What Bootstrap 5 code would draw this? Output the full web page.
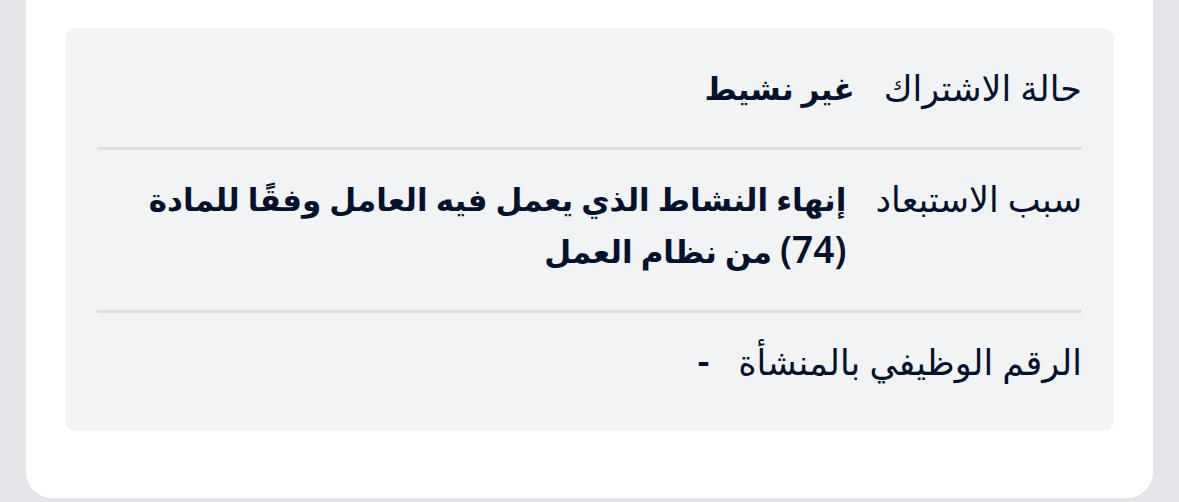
<!DOCTYPE html>
<html lang="ar" dir="rtl"><head><meta charset="utf-8"><meta name="viewport" content="width=device-width, initial-scale=1"><title>حالة الاشتراك</title>
<link href="https://cdn.jsdelivr.net/npm/bootstrap@5.3.0/dist/css/bootstrap.min.css" rel="stylesheet">
<style>
body{background:#e4e5e9;color:#03112d;font-family:"Noto Sans","DejaVu Sans",sans-serif;line-height:52px}
.sheet{background:#fff;border-radius:0 0 26px 26px;margin:0 26px;padding:28px 39px 67px}
.panel{background:#f2f3f5;border-radius:10px;padding:34px 32px 43px}
.item{gap:29px;margin:0}
.item+.item{border-top:3px solid #dedfe1;padding-top:23px}
.item:not(:last-child){padding-bottom:33px}
.item dt{font-size:35px;font-weight:400;white-space:nowrap}
.item dd{font-size:31px;font-weight:700;margin:0}
.number{font-size:37px;font-weight:600;line-height:1}
</style></head><body>
<main class="sheet"><section class="panel">
<dl class="item d-flex"><dt>حالة الاشتراك</dt><dd>غير نشيط</dd></dl>
<dl class="item d-flex"><dt>سبب الاستبعاد</dt><dd>إنهاء النشاط الذي يعمل فيه العامل وفقًا للمادة <span class="number">(74)</span> من نظام العمل</dd></dl>
<dl class="item d-flex"><dt>الرقم الوظيفي بالمنشأة</dt><dd><span class="number">-</span></dd></dl>
</section></main>
<script src="https://cdn.jsdelivr.net/npm/bootstrap@5.3.0/dist/js/bootstrap.bundle.min.js"></script>
</body></html>
